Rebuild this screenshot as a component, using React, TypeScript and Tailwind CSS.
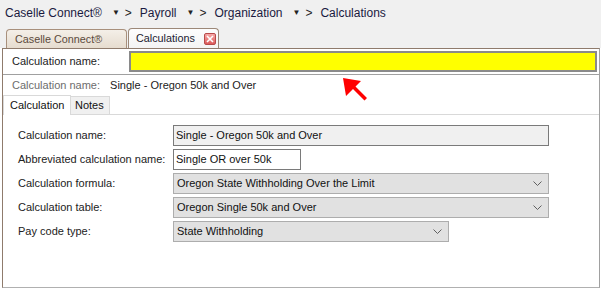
import React from "react";

const font = { fontFamily: '"Liberation Sans", Arial, sans-serif' };

function Chevron() {
  return (
    <svg width="9" height="5" viewBox="0 0 9 5" className="shrink-0">
      <path d="M0.5 0.5 L4.5 4.5 L8.5 0.5" fill="none" stroke="#606060" strokeWidth="1" />
    </svg>
  );
}

function Crumb({ label }: { label: string }) {
  return (
    <div className="flex items-center shrink-0">
      <span className="text-[#1a1a40]">{label}</span>
      <span className="ml-[10px] text-[8px] text-[#222]">▼</span>
      <span className="ml-[5px] text-[#222]">&gt;</span>
    </div>
  );
}

export default function App() {
  return (
    <div className="relative w-[601px] h-[288px] bg-white overflow-hidden text-[11px]" style={font}>
      <div className="bg-[#f0f0f0] h-[48px] flex flex-col">
        <div className="h-[25px] flex items-center pl-[5px] gap-[8px] text-[12px]">
          <Crumb label="Caselle Connect®" />
          <Crumb label="Payroll" />
          <Crumb label="Organization" />
          <span className="text-[#1a1a40]">Calculations</span>
        </div>
        <div className="flex items-end pl-[6px] h-[23px]">
          <div className="shrink-0 h-[19px] w-[121px] flex items-center pl-[8px] rounded-t-[4px] border border-b-0 border-[#a8907c] bg-gradient-to-b from-[#f4efe8] to-[#e6dccf] text-[#5b4a3c] text-[10.8px]">
            Caselle Connect®
          </div>
          <div className="shrink-0 h-[20px] w-[91px] ml-[1px] flex items-center pl-[7px] rounded-t-[4px] border border-b-0 border-[#9c8878] bg-gradient-to-b from-[#fdfdfd] to-[#f4f4f4] text-[#1a1a30] text-[10.8px]">
            <span>Calculations</span>
            <span className="shrink-0 ml-[9px] w-[12px] h-[12px] rounded-[2px] border border-[#b84a4a] bg-gradient-to-b from-[#f6a8a8] to-[#dc5a5a] flex items-center justify-center">
              <svg width="8" height="8" viewBox="0 0 8 8">
                <path d="M1 1 L7 7 M7 1 L1 7" stroke="white" strokeWidth="1.6" />
              </svg>
            </span>
          </div>
        </div>
      </div>

      <div className="ml-[2px] w-[598px] h-[240px] border-l border-t border-[#8f7b6c] border-r-[#a0a0a0] border-r border-b border-b-[#b0b0b0] flex flex-col">
        <div className="h-[26px] flex items-center border-b border-[#a0a0a0]">
          <span className="pl-[9px] w-[126px] text-[#222]">Calculation name:</span>
          <div className="h-[21px] w-[468px] bg-[#ffff00] border-2 border-[#8a8a8a]" />
        </div>
        <div className="h-[20px] flex items-center pl-[9px]">
          <span className="text-[#6d6d6d]">Calculation name:</span>
          <span className="ml-[10px] text-[#222]">Single - Oregon 50k and Over</span>
        </div>
        <div className="flex items-end h-[20px] border-b border-[#d9d9d9]">
          <div className="h-[20px] w-[68px] -mb-px bg-white border border-b-0 border-[#d9d9d9] flex items-center pl-[6px] text-[#111]">
            Calculation
          </div>
          <div className="h-[18px] w-[39px] bg-[#f0f0f0] border border-l-0 border-b-0 border-[#d9d9d9] flex items-center pl-[4px] text-[#111]">
            Notes
          </div>
        </div>
        <div className="flex flex-col gap-[3px] pt-[10px] pl-[15px]">
          <Row label="Calculation name:">
            <div className="h-[21px] w-[376px] bg-[#f0f0f0] border border-[#7a7a7a] flex items-center pl-[2px] text-[#111]">
              Single - Oregon 50k and Over
            </div>
          </Row>
          <Row label="Abbreviated calculation name:">
            <div className="h-[21px] w-[128px] bg-white border border-[#7a7a7a] flex items-center pl-[2px] text-[#111]">
              Single OR over 50k
            </div>
          </Row>
          <Row label="Calculation formula:">
            <Select w="w-[376px]" value="Oregon State Withholding Over the Limit" />
          </Row>
          <Row label="Calculation table:">
            <Select w="w-[376px]" value="Oregon Single 50k and Over" />
          </Row>
          <Row label="Pay code type:">
            <Select w="w-[276px]" value="State Withholding" />
          </Row>
        </div>
      </div>

      <svg className="absolute left-[340px] top-[74px]" width="32" height="30" viewBox="0 0 32 30">
        <polygon points="3,4 21,7 15.5,12.5 27,24 24.5,26.5 13,15 6,22" fill="#ff0000" />
      </svg>
    </div>
  );
}

function Row({ label, children }: { label: string; children: React.ReactNode }) {
  return (
    <div className="flex items-center h-[21px]">
      <span className="w-[155px] text-[#222]">{label}</span>
      {children}
    </div>
  );
}

function Select({ w, value }: { w: string; value: string }) {
  return (
    <div className={`h-[21px] ${w} bg-[#e1e1e1] border border-[#adadad] flex items-center justify-between pl-[3px] pr-[6px] text-[#111]`}>
      <span>{value}</span>
      <Chevron />
    </div>
  );
}
